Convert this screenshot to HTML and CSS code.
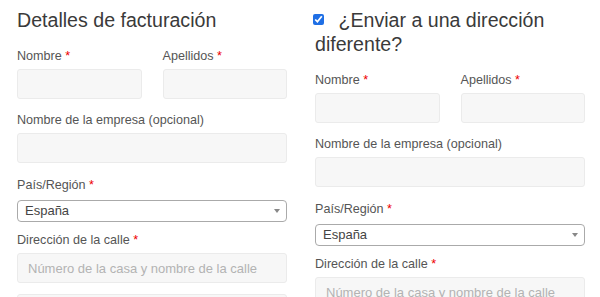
FILE: index.html
```html
<!DOCTYPE html>
<html lang="es">
<head>
  <meta charset="UTF-8" />
  <meta name="viewport" content="width=device-width, initial-scale=1.0" />
  <title>Finalizar compra</title>
  <link rel="stylesheet" href="styles.css">
</head>
<body>
  <form class="checkout">
    <div class="col">
      <h3>Detalles de facturación</h3>
      <div class="row-pair">
        <p class="row">
          <label for="billing_first_name">Nombre <abbr class="required">*</abbr></label>
          <input type="text" id="billing_first_name">
        </p>
        <p class="row">
          <label for="billing_last_name">Apellidos <abbr class="required">*</abbr></label>
          <input type="text" id="billing_last_name">
        </p>
      </div>
      <p class="row">
        <label for="billing_company">Nombre de la empresa (opcional)</label>
        <input type="text" id="billing_company">
      </p>
      <div class="row row-select">
        <label>País/Región <abbr class="required">*</abbr></label>
        <span class="select">España<span class="arrow"></span></span>
      </div>
      <p class="row">
        <label for="billing_address_1">Dirección de la calle <abbr class="required">*</abbr></label>
        <input type="text" id="billing_address_1" placeholder="Número de la casa y nombre de la calle">
      </p>
      <p class="row">
        <input type="text" id="billing_address_2">
      </p>
    </div>

    <div class="col">
      <h3><input type="checkbox" class="ship-check" checked> ¿Enviar a una dirección diferente?</h3>
      <div class="row-pair">
        <p class="row">
          <label for="shipping_first_name">Nombre <abbr class="required">*</abbr></label>
          <input type="text" id="shipping_first_name">
        </p>
        <p class="row">
          <label for="shipping_last_name">Apellidos <abbr class="required">*</abbr></label>
          <input type="text" id="shipping_last_name">
        </p>
      </div>
      <p class="row">
        <label for="shipping_company">Nombre de la empresa (opcional)</label>
        <input type="text" id="shipping_company">
      </p>
      <div class="row row-select">
        <label>País/Región <abbr class="required">*</abbr></label>
        <span class="select">España<span class="arrow"></span></span>
      </div>
      <p class="row">
        <label for="shipping_address_1">Dirección de la calle <abbr class="required">*</abbr></label>
        <input type="text" id="shipping_address_1" placeholder="Número de la casa y nombre de la calle">
      </p>
    </div>
  </form>
</body>
</html>
```

FILE: styles.css
```css
body {
  margin: 0;
  padding: 0;
  background: #fff;
  font-family: "Liberation Sans", Arial, sans-serif;
  color: #555;
  overflow: hidden;
}
.checkout {
  display: flex;
  gap: 28px;
  padding: 8px 15px 0 17px;
}
.col {
  width: 270px;
  flex: none;
}
h3 {
  margin: 0 0 14px;
  font-size: 19.6px;
  font-weight: normal;
  line-height: 24px;
  color: #3a3a3a;
}
.ship-check {
  width: 11px;
  height: 11px;
  margin: 0 9px 0 -2px;
  vertical-align: 2px;
  accent-color: #1f6fe5;
}
.row-pair {
  display: grid;
  grid-template-columns: 1fr 1fr;
  gap: 21px;
}
.row {
  margin: 0 0 11px;
  padding: 0;
}
.row label {
  display: block;
  font-size: 12.6px;
  line-height: 20px;
  margin-bottom: 3px;
}
.required {
  color: #e00;
  text-decoration: none;
  border: none;
}
.row input {
  display: block;
  box-sizing: border-box;
  width: 100%;
  height: 30px;
  margin: 0;
  padding: 0 10px;
  background: #f7f7f7;
  border: 1px solid #ebebeb;
  border-radius: 3px;
  font-family: inherit;
  font-size: 13px;
  color: #444;
}
.row input::placeholder {
  color: #b3b3b3;
}
.row-select {
  padding-top: 1px;
  margin-bottom: 8px;
}
.row-select label {
  margin-bottom: 5px;
}
.select {
  position: relative;
  display: block;
  box-sizing: border-box;
  height: 22px;
  padding-left: 7px;
  background: #fff;
  border: 1px solid #aaa;
  border-radius: 4px;
  font-size: 13px;
  line-height: 20px;
  color: #444;
}
.arrow {
  position: absolute;
  right: 6px;
  top: 8px;
  border-style: solid;
  border-width: 4px 3px 0;
  border-color: #888 transparent transparent;
}
```
